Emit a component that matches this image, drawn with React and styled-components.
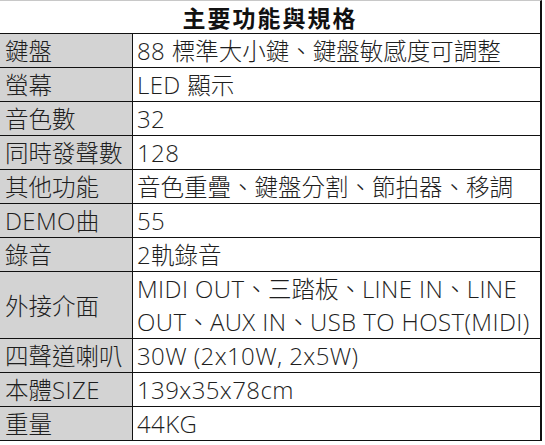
import React from 'react'
import styled, { createGlobalStyle } from 'styled-components'

const GlobalStyle = createGlobalStyle`
  body {
    margin: 0;
    background: #ffffff;
  }
`

const Table = styled.div`
  width: 542px;
  border-top: 1px solid #c8c8c8;
  border-right: 2px solid #111;
  box-sizing: border-box;
  color: #1e1e1e;
`

const Title = styled.div`
  height: 33px;
  display: flex;
  align-items: center;
  justify-content: center;
  font-family: "Noto Sans CJK TC", sans-serif;
  font-size: 23px;
  font-weight: 700;
  color: #111;
  border-bottom: 1px solid #111;
  box-sizing: border-box;
  letter-spacing: 2px;
`

const Row = styled.div`
  display: grid;
  grid-template-columns: 133px 1fr;
  height: ${({ $tall }) => ($tall ? '67px' : '34px')};
  border-bottom: 1px solid #111;
  box-sizing: border-box;
`

const Cell = styled.div`
  display: flex;
  align-items: center;
  padding-left: ${({ $label }) => ($label ? '5px' : '4px')};
  background: ${({ $label }) => ($label ? '#d3d3d3' : 'transparent')};
  border-right: ${({ $label }) => ($label ? '1px solid #111' : 'none')};
  white-space: nowrap;
  overflow: hidden;
`

const Line = styled.div`
  height: 33px;
  line-height: 33px;
`

const Han = styled.span`
  font-family: "Noto Sans CJK TC", sans-serif;
  font-size: 23.5px;
  font-weight: 300;
  line-height: 33px;
  vertical-align: top;
`

const Latin = styled.span`
  font-family: "Open Sans", "Noto Sans CJK TC", sans-serif;
  font-size: 24px;
  font-weight: 300;
  letter-spacing: 0.4px;
  line-height: 33px;
  vertical-align: top;
`

const cjk = /([\u3000-\u303f\u3400-\u9fff\uff00-\uffef]+)/

const Text = ({ children }) =>
  children
    .split(cjk)
    .filter(Boolean)
    .map((part, i) => (cjk.test(part) ? <Han key={i}>{part}</Han> : <Latin key={i}>{part}</Latin>))

const specs = [
  ['鍵盤', '88 標準大小鍵、鍵盤敏感度可調整'],
  ['螢幕', 'LED 顯示'],
  ['音色數', '32'],
  ['同時發聲數', '128'],
  ['其他功能', '音色重疊、鍵盤分割、節拍器、移調'],
  ['DEMO曲', '55'],
  ['錄音', '2軌錄音'],
  ['外接介面', ['MIDI OUT、三踏板、LINE IN、LINE', 'OUT、AUX IN、USB TO HOST(MIDI)']],
  ['四聲道喇叭', ['30W (2x10W, 2x5W)']],
  ['本體SIZE', ['139x35x78cm']],
  ['重量', ['44KG']],
].map(([label, value]) => [label, Array.isArray(value) ? value : [value]])

const App = () => {
  return (
    <>
      <GlobalStyle />
      <Table>
        <Title>主要功能與規格</Title>
        {specs.map(([label, lines]) => (
          <Row key={label} $tall={lines.length > 1}>
            <Cell $label>
              <Line>
                <Text>{label}</Text>
              </Line>
            </Cell>
            <Cell>
              <div>
                {lines.map((line) => (
                  <Line key={line}>
                    <Text>{line}</Text>
                  </Line>
                ))}
              </div>
            </Cell>
          </Row>
        ))}
      </Table>
    </>
  )
}

export default App
